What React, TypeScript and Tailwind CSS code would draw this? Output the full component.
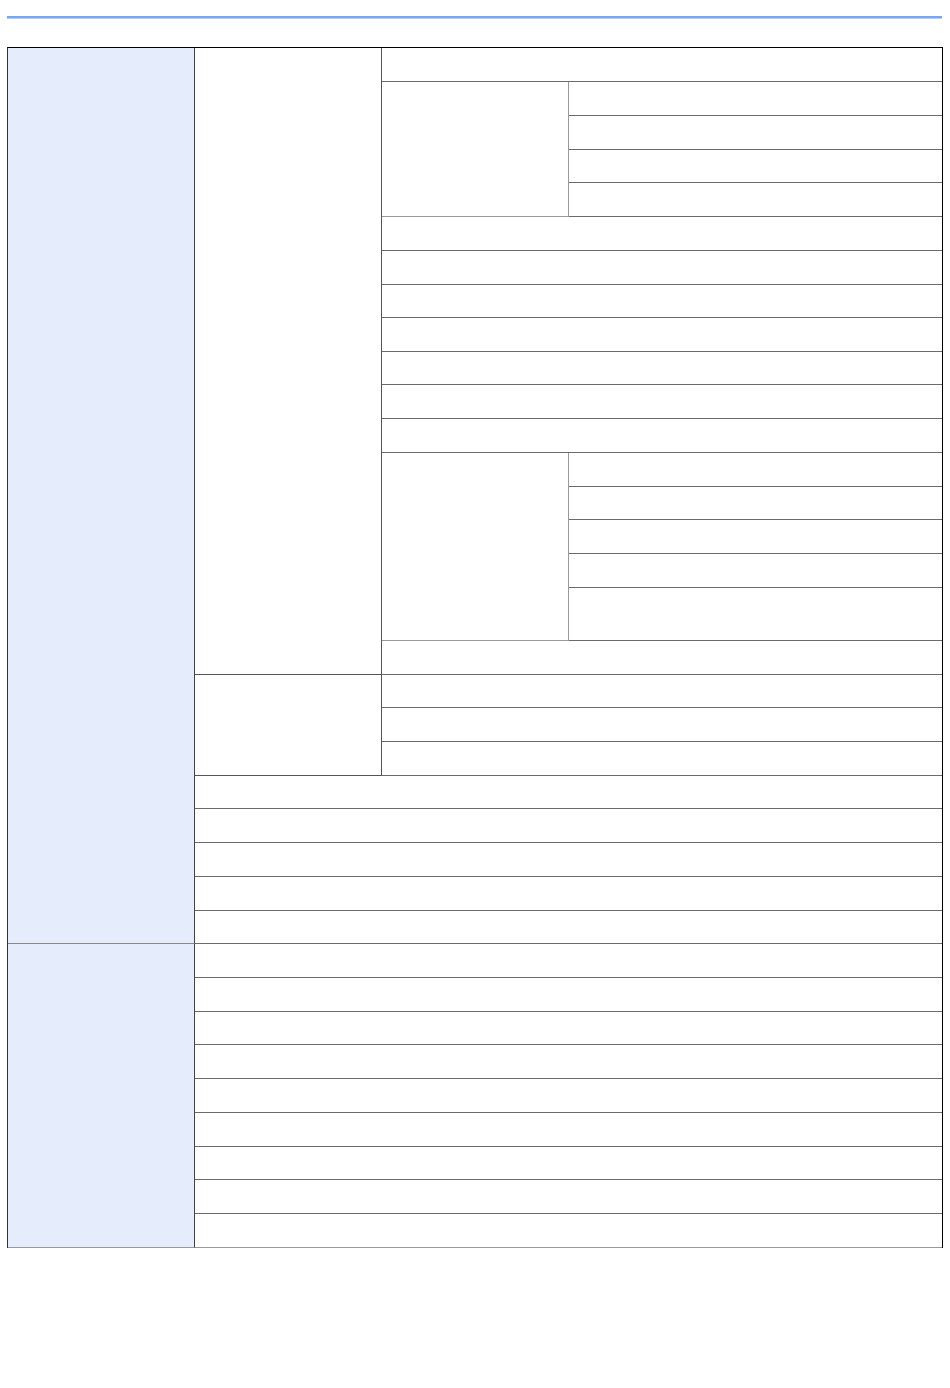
import React from "react";

const cell = "border-b border-[#6b6b6b] bg-white";
const midR = "border-r border-[#555555]";

export default function App() {
  return (
    <div className="w-[950px] h-[1388px] bg-white" style={{ fontFamily: '"Liberation Sans", Arial, sans-serif' }}>
      <div className="pt-[16px] px-[7px]">
        <div className="w-[935px] h-[2px] bg-[#78a6f4]" />
        <div className="w-[935px] h-[1px] bg-[#b3cdf8]" />
      </div>
      <div className="mt-[28px] ml-[7px] w-[936px] grid grid-cols-[187px_187px_187px_373px] grid-rows-[34px_34px_34px_33px_34px_34px_34px_33px_34px_33px_34px_34px_34px_33px_34px_34px_53px_34px_33px_34px_34px_33px_34px_34px_34px_33px_34px_34px_33px_34px_34px_34px_33px_34px_34px] border-t border-t-black border-l border-l-[#333333] border-r border-r-black">
        {/* Group A */}
        <div className="col-start-1 row-start-1 row-span-26 bg-[#e5ecfc] border-r border-[#444444] border-b border-b-[#888888]" />
        <div className={`col-start-2 row-start-1 row-span-18 ${cell} ${midR}`} />
        <div className={`col-start-3 col-span-2 row-start-1 ${cell}`} />
        <div className={`col-start-3 row-start-2 row-span-4 ${cell} border-r border-[#999999]`} />
        <div className={`col-start-4 row-start-2 ${cell}`} />
        <div className={`col-start-4 row-start-3 ${cell}`} />
        <div className={`col-start-4 row-start-4 ${cell}`} />
        <div className={`col-start-4 row-start-5 ${cell}`} />
        <div className={`col-start-3 col-span-2 row-start-6 ${cell}`} />
        <div className={`col-start-3 col-span-2 row-start-7 ${cell}`} />
        <div className={`col-start-3 col-span-2 row-start-8 ${cell}`} />
        <div className={`col-start-3 col-span-2 row-start-9 ${cell}`} />
        <div className={`col-start-3 col-span-2 row-start-10 ${cell}`} />
        <div className={`col-start-3 col-span-2 row-start-11 ${cell}`} />
        <div className={`col-start-3 col-span-2 row-start-12 ${cell}`} />
        <div className={`col-start-3 row-start-13 row-span-5 ${cell} border-r border-[#999999]`} />
        <div className={`col-start-4 row-start-13 ${cell}`} />
        <div className={`col-start-4 row-start-14 ${cell}`} />
        <div className={`col-start-4 row-start-15 ${cell}`} />
        <div className={`col-start-4 row-start-16 ${cell}`} />
        <div className={`col-start-4 row-start-17 ${cell}`} />
        <div className={`col-start-3 col-span-2 row-start-18 ${cell}`} />
        <div className={`col-start-2 row-start-19 row-span-3 ${cell} ${midR}`} />
        <div className={`col-start-3 col-span-2 row-start-19 ${cell}`} />
        <div className={`col-start-3 col-span-2 row-start-20 ${cell}`} />
        <div className={`col-start-3 col-span-2 row-start-21 ${cell}`} />
        <div className={`col-start-2 col-span-3 row-start-22 ${cell}`} />
        <div className={`col-start-2 col-span-3 row-start-23 ${cell}`} />
        <div className={`col-start-2 col-span-3 row-start-24 ${cell}`} />
        <div className={`col-start-2 col-span-3 row-start-25 ${cell}`} />
        <div className={`col-start-2 col-span-3 row-start-26 ${cell}`} />
        {/* Group C */}
        <div className="col-start-1 row-start-27 row-span-9 bg-[#e5ecfc] border-r border-[#444444] border-b border-b-[#999999]" />
        <div className={`col-start-2 col-span-3 row-start-27 ${cell}`} />
        <div className={`col-start-2 col-span-3 row-start-28 ${cell}`} />
        <div className={`col-start-2 col-span-3 row-start-29 ${cell}`} />
        <div className={`col-start-2 col-span-3 row-start-30 ${cell}`} />
        <div className={`col-start-2 col-span-3 row-start-31 ${cell}`} />
        <div className={`col-start-2 col-span-3 row-start-32 ${cell}`} />
        <div className={`col-start-2 col-span-3 row-start-33 ${cell}`} />
        <div className={`col-start-2 col-span-3 row-start-34 ${cell}`} />
        <div className="col-start-2 col-span-3 row-start-35 bg-white border-b border-[#999999]" />
      </div>
    </div>
  );
}
